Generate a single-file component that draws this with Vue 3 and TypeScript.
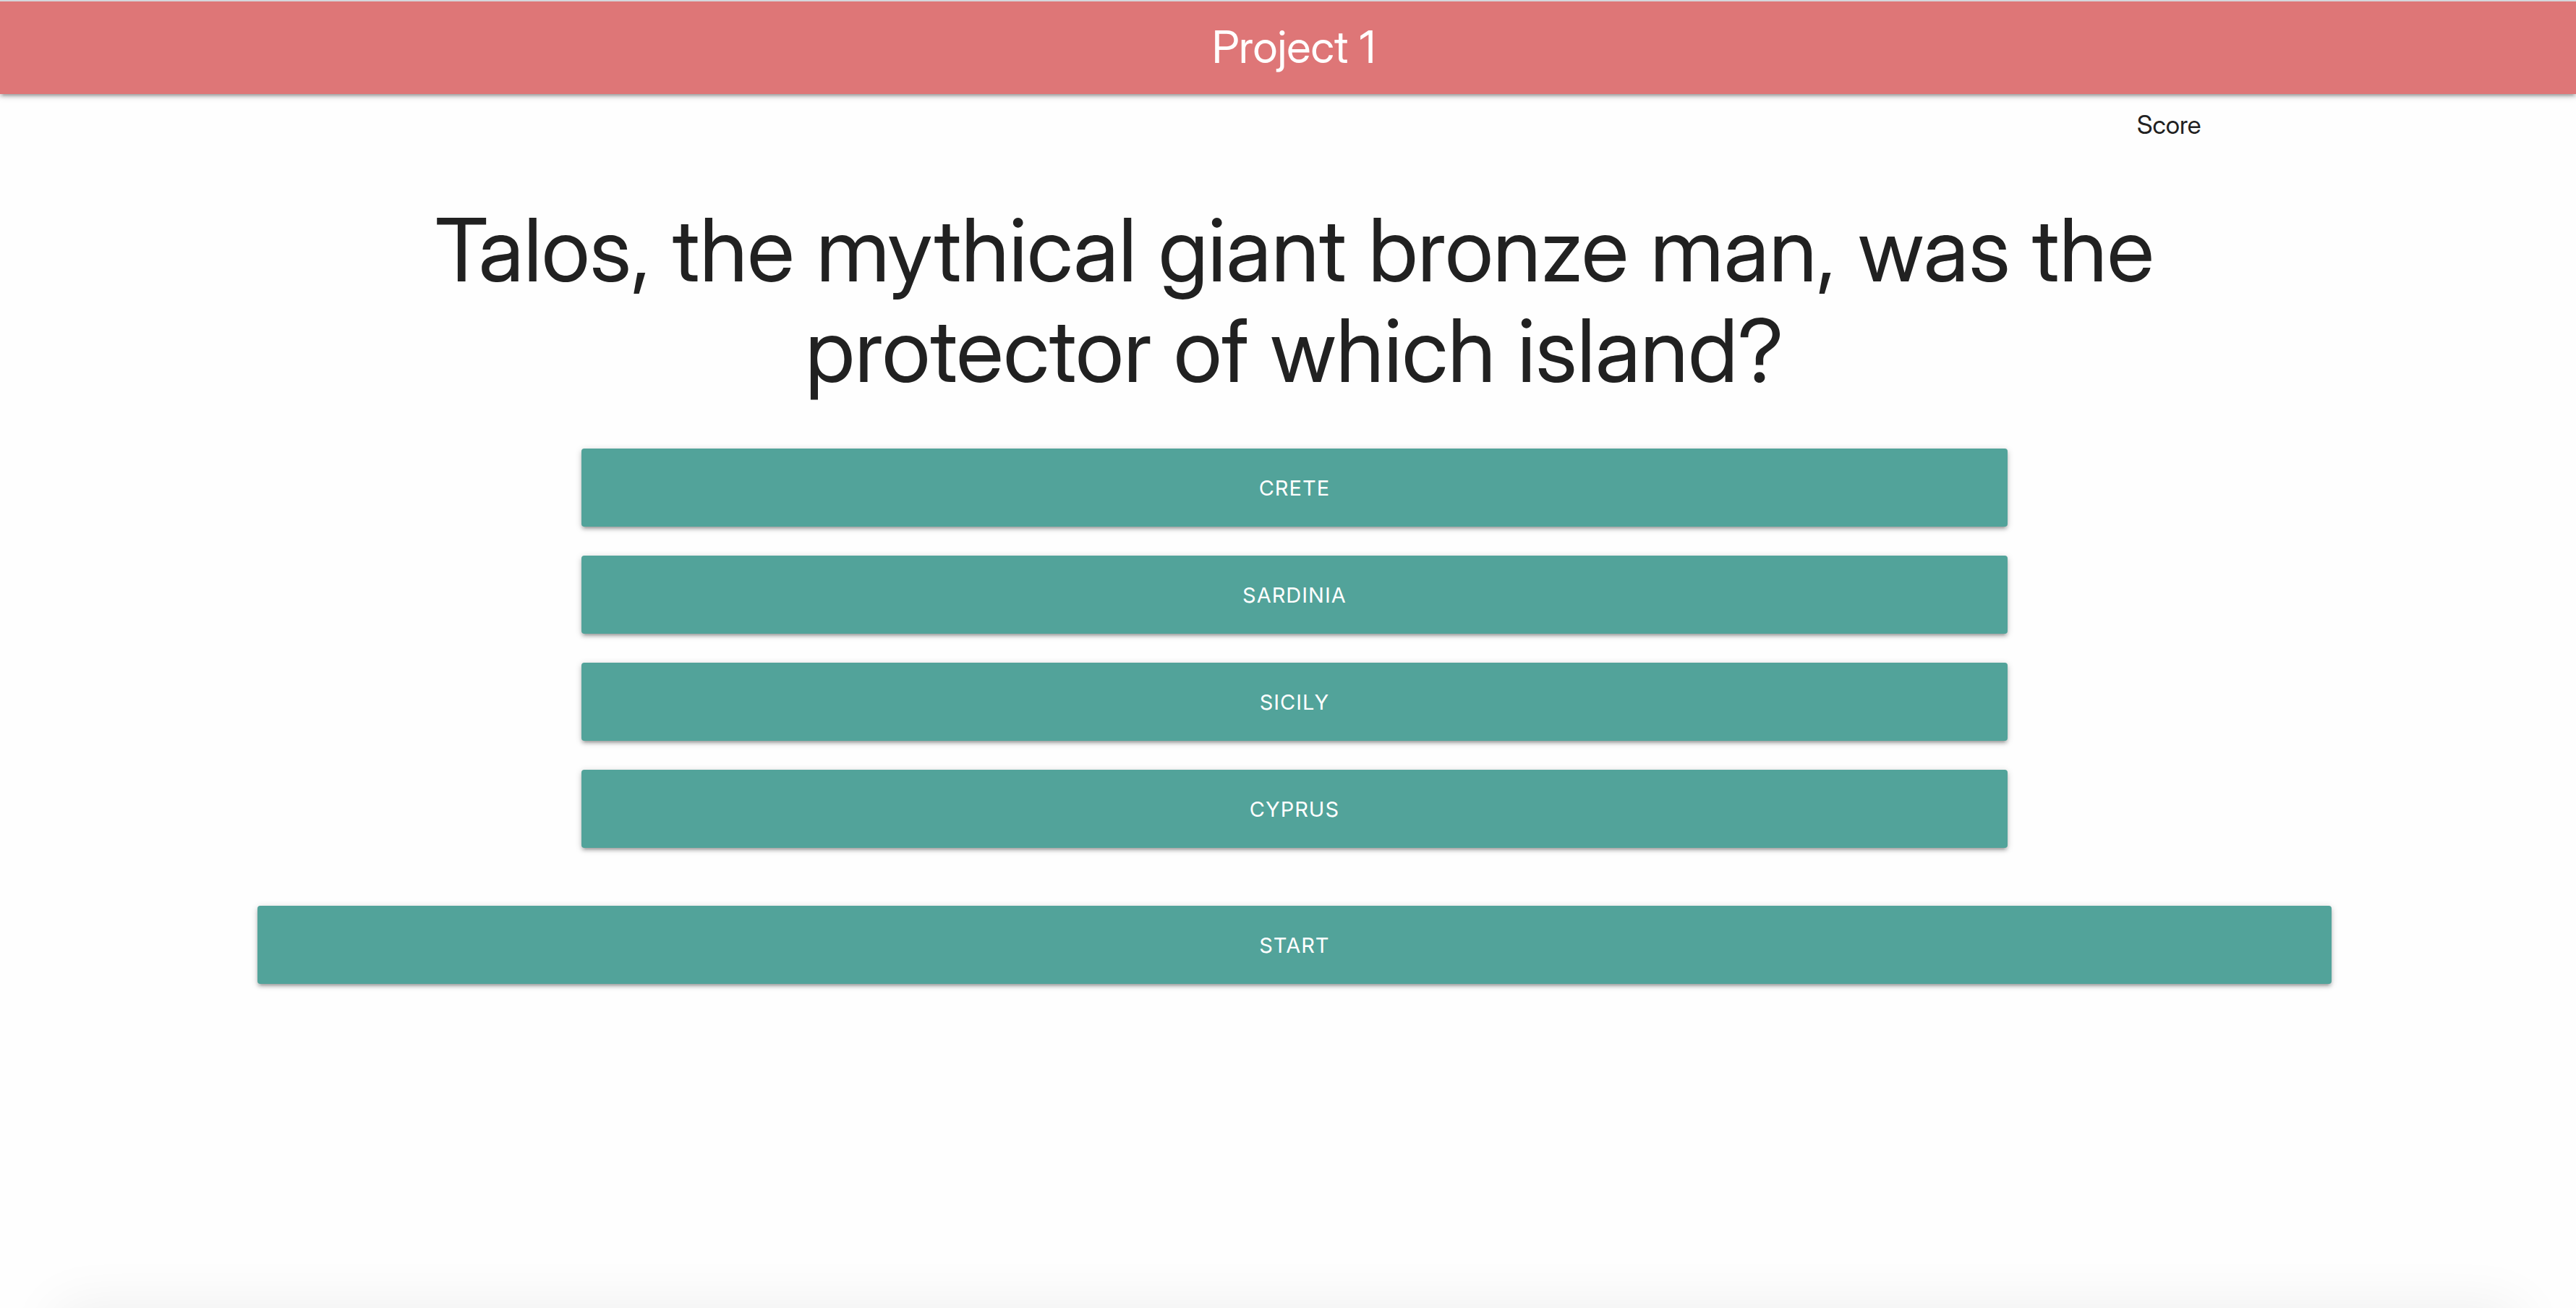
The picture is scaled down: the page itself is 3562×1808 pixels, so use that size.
<script setup lang="ts">
import { ref } from 'vue'

const title = 'Project 1'
const question = ref('Talos, the mythical giant bronze man, was the protector of which island?')
const answers = ref<string[]>(['Crete', 'Sardinia', 'Sicily', 'Cyprus'])
</script>

<template>
  <div class="page">
    <header class="nav">
      <span class="brand">{{ title }}</span>
    </header>
    <main class="content">
      <p class="score">Score</p>
      <h1 class="question">{{ question }}</h1>
      <div class="answers">
        <button v-for="answer in answers" :key="answer" type="button" class="btn">{{ answer }}</button>
      </div>
      <button type="button" class="btn start">Start</button>
    </main>
  </div>
</template>

<style>
body {
  margin: 0;
  background: #fefefe;
}
</style>

<style scoped>
.page {
  position: relative;
  box-sizing: border-box;
  min-height: 100vh;
  overflow: hidden;
  border-top: 2px solid #d5d6db;
  color: #212121;
  font-family: "Inter Display", Inter, "Liberation Sans", sans-serif;
}

/* soft shade along the bottom edge of the window */
.page::after {
  content: "";
  position: absolute;
  left: 80px;
  right: 80px;
  top: 100%;
  height: 100px;
  box-shadow: 0 0 80px rgba(0, 0, 0, 0.07);
}

.nav {
  box-sizing: border-box;
  height: 128px;
  padding-left: 16px;
  background: #de7677;
  color: #fff;
  text-align: center;
  box-shadow: 0 4px 4px rgba(0, 0, 0, 0.14), 0 6px 2px -4px rgba(0, 0, 0, 0.12), 0 2px 10px rgba(0, 0, 0, 0.2);
}

.brand {
  font-size: 62px;
  line-height: 126px;
}

.content {
  padding: 20px 9.5% 0 10%;
}

.score {
  margin: 0;
  padding-right: 180px;
  font-size: 35px;
  line-height: 44px;
  text-align: right;
}

.question {
  margin: 82px 200px 66px;
  font-size: 121px;
  font-weight: 400;
  line-height: 139px;
  text-align: center;
}

.answers {
  display: flex;
  flex-direction: column;
  gap: 40px;
  width: 68.75%;
  margin: 0 auto 80px;
}

.btn {
  display: block;
  width: 100%;
  height: 108px;
  padding: 0 56px;
  border: 0;
  border-radius: 4px;
  background: #52a39a;
  color: #fff;
  font-family: Inter, "Liberation Sans", sans-serif;
  font-size: 29px;
  letter-spacing: 1px;
  text-transform: uppercase;
  cursor: pointer;
  box-shadow: 0 4px 4px rgba(0, 0, 0, 0.14), 0 6px 2px -4px rgba(0, 0, 0, 0.12), 0 2px 10px rgba(0, 0, 0, 0.2);
}
</style>
